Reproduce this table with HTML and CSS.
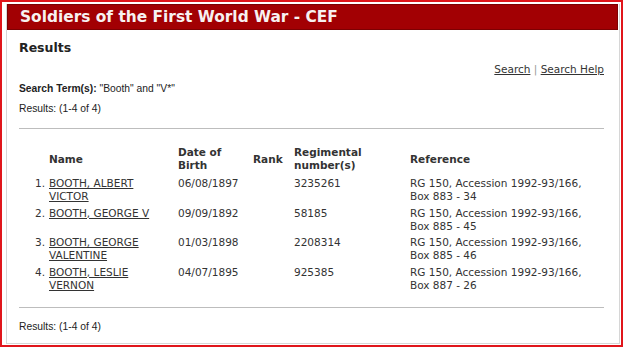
FILE: index.html
```html
<!DOCTYPE html>
<html lang="en">
<head>
<meta charset="utf-8">
<title>Soldiers of the First World War - CEF</title>
<link rel="stylesheet" href="styles.css">
</head>
<body>
<div class="frame">
  <div class="panel">
    <div class="banner"><h1 class="banner-title">Soldiers of the First World War - CEF</h1></div>
    <div class="content">
      <h2 class="heading">Results</h2>
      <div class="links"><a href="#">Search</a> <span class="sep">|</span> <a href="#">Search Help</a></div>
      <p class="term"><b>Search Term(s):</b> "Booth" and "V*"</p>
      <p class="count">Results: (1-4 of 4)</p>
      <hr class="rule rule-top">
      <table class="results">
        <colgroup>
          <col class="c-num"><col class="c-name"><col class="c-date"><col class="c-rank"><col class="c-reg"><col class="c-ref">
        </colgroup>
        <thead>
          <tr><th></th><th>Name</th><th>Date of Birth</th><th>Rank</th><th>Regimental number(s)</th><th>Reference</th></tr>
        </thead>
        <tbody>
          <tr><td class="num">1.</td><td><a href="#">BOOTH, ALBERT VICTOR</a></td><td>06/08/1897</td><td></td><td>3235261</td><td>RG 150, Accession 1992&#8209;93/166, Box 883 - 34</td></tr>
          <tr><td class="num">2.</td><td><a href="#">BOOTH, GEORGE V</a></td><td>09/09/1892</td><td></td><td>58185</td><td>RG 150, Accession 1992&#8209;93/166, Box 885 - 45</td></tr>
          <tr><td class="num">3.</td><td><a href="#">BOOTH, GEORGE VALENTINE</a></td><td>01/03/1898</td><td></td><td>2208314</td><td>RG 150, Accession 1992&#8209;93/166, Box 885 - 46</td></tr>
          <tr><td class="num">4.</td><td><a href="#">BOOTH, LESLIE VERNON</a></td><td>04/07/1895</td><td></td><td>925385</td><td>RG 150, Accession 1992&#8209;93/166, Box 887 - 26</td></tr>
        </tbody>
      </table>
      <hr class="rule rule-bottom">
      <p class="count count-bottom">Results: (1-4 of 4)</p>
    </div>
  </div>
</div>
</body>
</html>
```
FILE: styles.css
```css
html, body {
  margin: 0;
  padding: 0;
  background: #ffffff;
}
.frame {
  box-sizing: border-box;
  width: 623px;
  height: 347px;
  border: 2px solid #e0151b;
  padding: 2px 1px 1px 4px;
  background: #ffffff;
}
.panel {
  box-sizing: border-box;
  height: 340px;
  border: 1px solid #d6d6d6;
  border-top: none;
  display: flex;
  flex-direction: column;
}
.banner {
  box-sizing: border-box;
  height: 26px;
  margin-right: 1px;
  background: #a20003;
  border: 1px solid #7d0002;
  display: flex;
  align-items: center;
  padding-left: 12px;
}
.banner-title {
  margin: 0;
  font-family: "DejaVu Sans", Verdana, sans-serif;
  font-weight: bold;
  font-size: 15.4px;
  line-height: 20px;
  color: #f7f1f1;
}
.content {
  padding: 0 15px 0 12px;
  color: #333333;
}
.heading {
  margin: 10px 0 0;
  font-family: "DejaVu Sans", Verdana, sans-serif;
  font-weight: bold;
  font-size: 12.5px;
  line-height: 16px;
  color: #222222;
}
.links {
  margin-top: 6px;
  text-align: right;
  font-family: "DejaVu Sans", Verdana, sans-serif;
  font-size: 10.5px;
  line-height: 14px;
}
.links a {
  color: #333333;
}
.sep {
  color: #999999;
}
.term, .count {
  margin: 0;
  font-family: "Liberation Sans", Arial, sans-serif;
  font-size: 10.3px;
  line-height: 13px;
  color: #222222;
}
.term {
  margin-top: 5.5px;
}
.count {
  margin-top: 7px;
}
.rule {
  border: none;
  height: 1px;
  background: #bdbdbd;
  margin: 0;
}
.rule-top {
  margin-top: 13.5px;
}
.results {
  margin-top: 17px;
  border-collapse: collapse;
  table-layout: fixed;
  width: 586px;
  font-family: "DejaVu Sans", Verdana, sans-serif;
  font-size: 10.5px;
  line-height: 13px;
  color: #333333;
}
.c-num { width: 30px; }
.c-name { width: 129px; }
.c-date { width: 75px; }
.c-rank { width: 41px; }
.c-reg { width: 116px; }
.c-ref { width: 195px; }
.results th {
  text-align: left;
  vertical-align: middle;
  font-weight: bold;
  padding: 0 12px 5px 0;
}
.results td {
  vertical-align: top;
  padding: 0 12px 3.5px 0;
}
.results th:nth-child(4), .results td:nth-child(4) {
  padding-right: 4px;
}
.results td.num {
  text-align: right;
  padding-right: 4px;
}
.results a {
  color: #333333;
}
.rule-bottom {
  margin-top: 12px;
}
.count-bottom {
  margin-top: 12px;
}
```
